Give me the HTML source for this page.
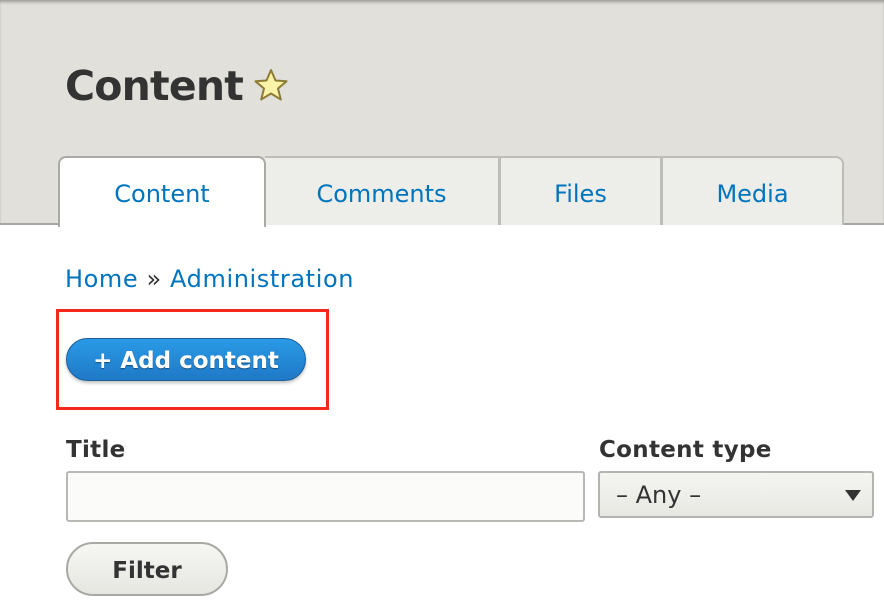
<!DOCTYPE html>
<html><head><meta charset="utf-8"><style>
*{box-sizing:border-box;margin:0;padding:0}
body{width:884px;height:614px;overflow:hidden;background:#fff;font-family:"DejaVu Sans","Liberation Sans",sans-serif;position:relative}
.hdr{position:absolute;left:0;top:0;width:884px;height:225px;background:#e1e0da;box-shadow:inset 0 3px 3px -1px #9a9a95;border-bottom:2px solid #a6a6a2}
h1{position:absolute;left:65px;top:62px;font-size:41px;font-weight:bold;color:#333;letter-spacing:-0.8px}
.tab{position:absolute;top:156px;height:69px;background:#ededea;border:2px solid #bdbdb9;border-bottom:none;color:#0074bd;font-size:24px;text-align:center;line-height:72px}
.a{position:absolute;color:#0074bd;font-size:24px;letter-spacing:0.6px}
.lbl{position:absolute;font-size:23px;font-weight:bold;color:#333;letter-spacing:0.3px}
</style></head><body>
<div class="hdr"></div>
<h1>Content</h1>
<svg style="position:absolute;left:253px;top:68px" width="36" height="35" viewBox="0 0 36 35"><path d="M18 2 L22.5 12.5 L33.5 13.3 L25 20.5 L27.8 31.5 L18 25.5 L8.2 31.5 L11 20.5 L2.5 13.3 L13.5 12.5 Z" fill="#fbf3a8" stroke="#8d7c38" stroke-width="2" stroke-linejoin="round"/></svg>
<div class="tab" style="left:265px;width:235px;border-left:none">Comments</div>
<div class="tab" style="left:499px;width:163px">Files</div>
<div class="tab" style="left:661px;width:183px;border-radius:0 8px 0 0">Media</div>
<div class="tab" style="left:58px;width:208px;height:71px;background:#fff;border-color:#a9a9a5;border-radius:8px 8px 0 0">Content</div>
<div class="a" style="left:65px;top:265px">Home <span style="color:#333">»</span> Administration</div>
<div style="position:absolute;left:56px;top:309px;width:273px;height:101px;border:3px solid #f5281e"></div>
<div style="position:absolute;left:66px;top:338px;width:240px;height:43px;border-radius:22px;background:linear-gradient(#2a9ae6,#1f79c7);border:1px solid #1c5f99;box-shadow:0 2px 3px rgba(0,0,0,.25);color:#fff;font-size:23px;font-weight:bold;text-align:center;line-height:44px;text-shadow:0 1px 1px rgba(0,0,0,.4)">+ Add content</div>
<div class="lbl" style="left:66px;top:437px">Title</div>
<div style="position:absolute;left:66px;top:471px;width:519px;height:51px;border:2px solid #b8b8b4;border-radius:3px;background:#fbfbf9"></div>
<div class="lbl" style="left:599px;top:437px">Content type</div>
<div style="position:absolute;left:598px;top:471px;width:276px;height:47px;border:2px solid #b3b3af;border-radius:3px;background:linear-gradient(#f4f4f1,#e8e8e3);font-size:24px;color:#333;line-height:44px;padding-left:16px">– Any –</div>
<svg style="position:absolute;left:845px;top:489px" width="16" height="12"><path d="M0 1 H16 L8 12 Z" fill="#333"/></svg>
<div style="position:absolute;left:66px;top:542px;width:162px;height:54px;border:2px solid #a8a8a4;border-radius:27px;background:linear-gradient(#f6f6f3,#e6e6e1);font-size:23px;font-weight:bold;color:#333;text-align:center;line-height:55px">Filter</div>
</body></html>
